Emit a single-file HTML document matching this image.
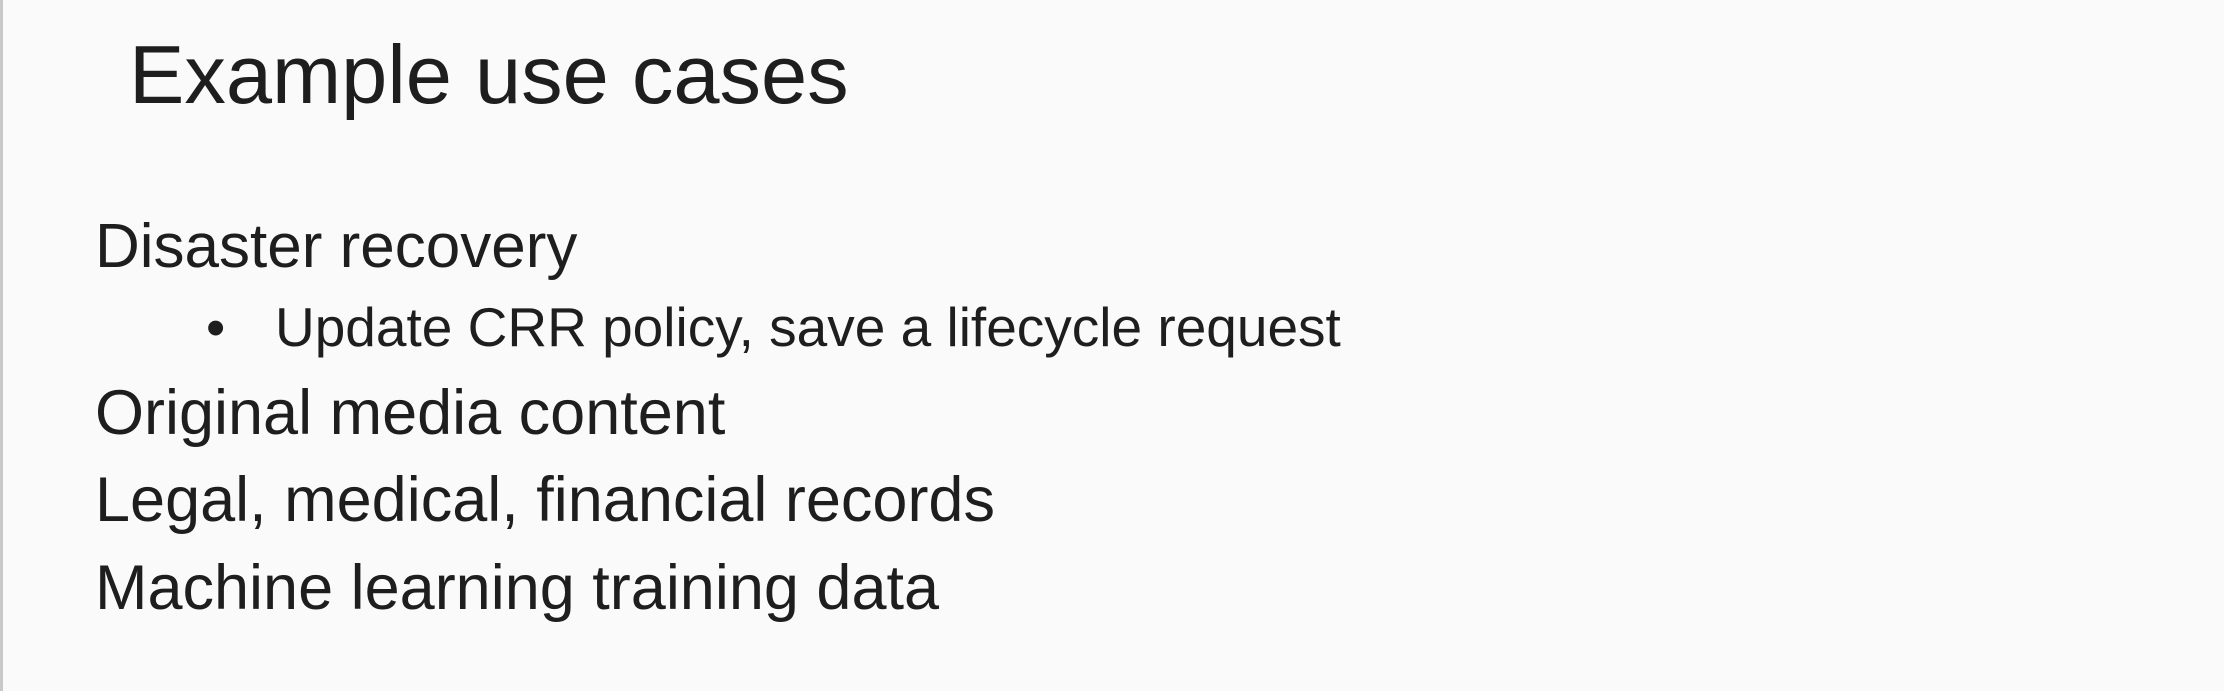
<!DOCTYPE html>
<html><head><style>
html,body{margin:0;padding:0;}
body{width:2224px;height:691px;background:#fafafa;position:relative;overflow:hidden;font-family:"Liberation Sans",sans-serif;color:#1e1e1e;}
.l{position:absolute;line-height:1;white-space:nowrap;}
.bar{position:absolute;left:0;top:0;width:3px;height:691px;background:#c8c8c8;}
</style></head><body>
<div class="bar"></div>
<div class="l" style="left:129px;top:33px;font-size:83px;">Example use cases</div>
<div class="l" style="left:95px;top:216px;font-size:62px;">Disaster recovery</div>
<div class="l" style="left:206px;top:300px;font-size:55px;">•</div>
<div class="l" style="left:275px;top:300px;font-size:55px;">Update CRR policy, save a lifecycle request</div>
<div class="l" style="left:95px;top:382px;font-size:63px;">Original media content</div>
<div class="l" style="left:95px;top:469px;font-size:63px;">Legal, medical, financial records</div>
<div class="l" style="left:95px;top:557px;font-size:63px;">Machine learning training data</div>
</body></html>
